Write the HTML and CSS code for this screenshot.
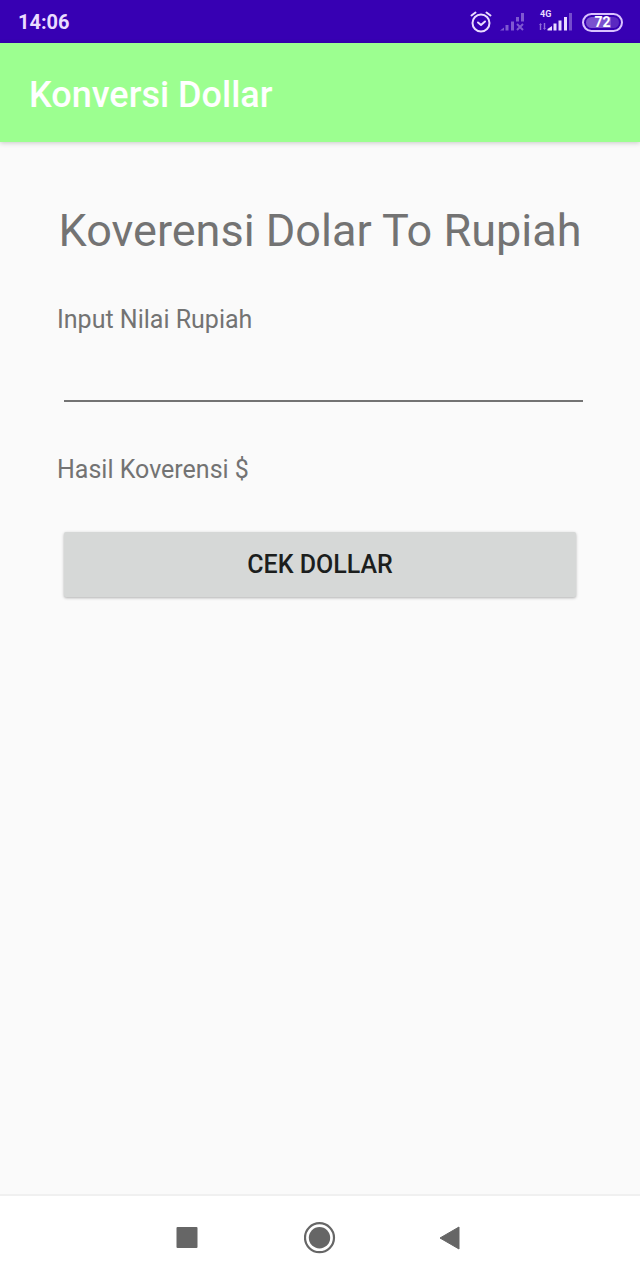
FILE: index.html
```html
<!DOCTYPE html>
<html lang="id">
<head>
<meta charset="utf-8">
<meta name="viewport" content="width=device-width, initial-scale=1">
<title>Konversi Dollar</title>
<link rel="stylesheet" href="styles.css">
</head>
<body>
<div class="screen">
  <div class="status-bar">
    <time class="clock">14:06</time>
    <div class="status-icons">
      <svg class="alarm" width="22" height="22" viewBox="0 0 22 22" fill="none" stroke="currentColor" stroke-width="2" stroke-linecap="round" stroke-linejoin="round" aria-hidden="true">
        <circle cx="11" cy="12" r="8.500"/>
        <path d="M1.500 4.500 5.500 1.500M20.500 4.500 16.500 1.500M8 11.500l3 2.500 4-3.500"/>
      </svg>
      <svg class="no-signal" width="24" height="20" viewBox="0 0 24 20" fill="currentColor" aria-hidden="true">
        <path d="M0 18.500 4 15.500v3zM5.500 13h3v5.500h-3zM11 9.500h3v9h-3zM16 5h3v4.500h-3zM21 1h3v8.500h-3z"/>
        <path d="m17 12 6 6m0-6-6 6" stroke="currentColor" stroke-width="2"/>
      </svg>
      <div class="network">
        <span class="network-type">4G</span>
        <svg class="signal" width="33" height="20" viewBox="0 0 33 20" fill="currentColor" aria-hidden="true">
          <path opacity=".5" d="M0 13 1.500 11 3 13H2.200v5H.8v-5zM4 16h.8v-5h1.400v5H7l-1.500 2z"/>
          <path d="M8.500 18.500V17l4.500-3v4.500zM14.500 11.500h3v7h-3zM19.500 8.500h3v10h-3zM25 5h3v13.500h-3z"/>
          <path opacity=".35" d="M30 1h3v17.500h-3z"/>
        </svg>
      </div>
      <span class="battery">72</span>
    </div>
  </div>
  <header class="app-bar"><h1 class="app-title">Konversi Dollar</h1></header>
  <main class="content">
    <h2 class="heading">Koverensi Dolar To Rupiah</h2>
    <form class="form">
      <label class="label" for="rupiah">Input Nilai Rupiah</label>
      <input class="field" id="rupiah" type="text" inputmode="decimal">
      <output class="result" for="rupiah">Hasil Koverensi $</output>
      <button class="submit" type="button">CEK DOLLAR</button>
    </form>
  </main>
  <nav class="nav-bar" aria-label="System">
    <button class="nav-button" type="button" aria-label="Recent apps">
      <svg width="32" height="32" viewBox="0 0 32 32" fill="currentColor" aria-hidden="true"><rect x="3.500" y="5" width="21" height="21" rx="1"/></svg>
    </button>
    <button class="nav-button" type="button" aria-label="Home">
      <svg width="32" height="32" viewBox="0 0 32 32" fill="currentColor" aria-hidden="true"><circle cx="15.500" cy="15.700" r="14.500" fill="none" stroke="currentColor" stroke-width="2.200"/><circle cx="15.500" cy="15.700" r="10.700"/></svg>
    </button>
    <button class="nav-button" type="button" aria-label="Back">
      <svg width="32" height="32" viewBox="0 0 32 32" fill="currentColor" stroke="currentColor" stroke-linejoin="round" aria-hidden="true"><path d="M24 5v22L5 16z"/></svg>
    </button>
  </nav>
</div>
</body>
</html>
```
FILE: styles.css
```css
* { box-sizing: border-box; }

body {
  margin: 0;
  background: #fafafa;
  color: #737373;
  font-family: Roboto, "Liberation Sans", sans-serif;
  font-size: 25px;
  line-height: 32px;
}

.screen {
  display: flex;
  flex-direction: column;
  min-height: 100vh;
}

.status-bar {
  display: flex;
  align-items: center;
  justify-content: space-between;
  padding: 6px 17px 5px 18px;
  background: #3700b3;
  color: #eadcff;
}

.clock {
  font-size: 20px;
  font-weight: 700;
}

.status-icons {
  display: flex;
  align-items: center;
  gap: 10px;
}

.alarm {
  margin-right: -2px;
}

.no-signal {
  margin-right: 5px;
  opacity: .4;
}

.network {
  position: relative;
  display: flex;
}

.network-type {
  position: absolute;
  top: -3px;
  left: 1px;
  font-size: 9px;
  font-weight: 700;
  line-height: 10px;
}

.battery {
  width: 41px;
  border: 2px solid #d9c2ff;
  border-radius: 10px;
  background: linear-gradient(to right, #7a50cf 72%, #5a28c0 72%);
  box-shadow: inset 0 0 0 2px #3700b3;
  color: #fff;
  font-size: 14px;
  font-weight: 700;
  line-height: 15px;
  text-align: center;
}

.app-bar {
  padding: 32px 29px 27px;
  background: #9cff90;
  box-shadow: 0 1px 5px rgba(0, 0, 0, .2);
}

.app-title {
  margin: 0;
  color: #fff;
  font-size: 36px;
  font-weight: 500;
  line-height: 40px;
}

.content {
  flex: 1;
  padding: 63px 57px;
}

.heading {
  margin: 0 0 47px;
  font-size: 45px;
  font-weight: 400;
  line-height: 52px;
  text-align: center;
}

.form {
  display: flex;
  flex-direction: column;
}

.field {
  height: 48px;
  margin: 18px 0 52px 7px;
  padding: 0;
  border: 0;
  border-bottom: 2px solid #737373;
  border-radius: 0;
  outline: 0;
  background: transparent;
  color: #212121;
  font: inherit;
}

.submit {
  margin: 46px 7px 0;
  padding: 17px 16px 16px;
  border: 0;
  border-radius: 2px;
  background: #d6d8d7;
  box-shadow: 0 1px 3px rgba(0, 0, 0, .3);
  color: #1c1e1d;
  font: inherit;
  font-weight: 500;
}

.nav-bar {
  display: flex;
  justify-content: center;
  border-top: 2px solid #f0f0f0;
  background: #fff;
  color: #666;
}

.nav-button {
  display: flex;
  justify-content: center;
  width: 131px;
  padding: 26px 0;
  border: 0;
  background: none;
  color: inherit;
}
```
